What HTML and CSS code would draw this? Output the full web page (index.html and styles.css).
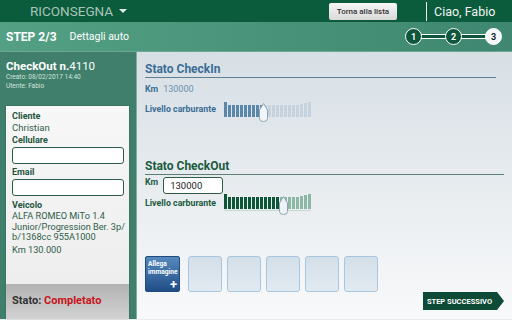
FILE: index.html
```html
<!DOCTYPE html>
<html lang="it">
<head>
    <meta charset="UTF-8">
    <meta name="viewport" content="width=device-width, initial-scale=1.0">
    <title>Riconsegna - Dettagli auto</title>
    <link rel="stylesheet" href="styles.css">
</head>
<body>
    <div class="topbar">
        <div class="app-title">RICONSEGNA <span class="caret"></span></div>
        <button class="back-button">Torna alla lista</button>
        <div class="divider"></div>
        <div class="greeting">Ciao, Fabio</div>
    </div>

    <div class="stepbar">
        <span class="step-label">STEP 2/3</span>
        <span class="step-title">Dettagli auto</span>
        <div class="steps">
            <span class="step-dot">1</span>
            <span class="step-line"></span>
            <span class="step-dot">2</span>
            <span class="step-line"></span>
            <span class="step-dot current">3</span>
        </div>
    </div>

    <div class="main">
        <div class="sidebar">
            <div class="order-title"><b>CheckOut n.</b>4110</div>
            <div class="order-meta">Creato: 08/02/2017 14:40</div>
            <div class="order-meta">Utente: Fabio</div>

            <div class="card">
                <div class="card-body">
                    <div class="field-label">Cliente</div>
                    <div class="field-value">Christian</div>
                    <div class="field-label">Cellulare</div>
                    <input class="field-input" type="text">
                    <div class="field-label email">Email</div>
                    <input class="field-input" type="text">
                    <div class="field-label vehicle">Veicolo</div>
                    <div class="vehicle-text">ALFA ROMEO MiTo 1.4<br>Junior/Progression Ber. 3p/<br>b/1368cc 955A1000</div>
                    <div class="vehicle-km">Km 130.000</div>
                </div>
                <div class="card-footer">Stato: <span class="status-done">Completato</span></div>
            </div>
        </div>

        <div class="content">
            <h2 class="section-title checkin">Stato CheckIn</h2>
            <div class="km-row checkin">
                <span class="small-label">Km</span>
                <span class="km-value">130000</span>
            </div>
            <div class="fuel-row checkin">
                <span class="small-label fuel-label">Livello carburante</span>
                <div class="gauge">
                    <span class="bar on"></span><span class="bar on"></span><span class="bar on"></span><span class="bar on"></span><span class="bar on"></span><span class="bar on"></span><span class="bar on"></span><span class="bar on"></span><span class="bar on"></span><span class="bar on"></span><span class="bar"></span><span class="bar"></span><span class="bar"></span><span class="bar"></span><span class="bar"></span><span class="bar"></span><span class="bar"></span><span class="bar"></span><span class="bar"></span><span class="bar"></span><span class="bar"></span><span class="bar"></span>
                    <svg class="thumb" style="left: 35px" width="9" height="19" viewBox="0 0 9 19"><path d="M4.5 0.5 L8.5 7 V15.5 Q8.5 18.5 4.5 18.5 Q0.5 18.5 0.5 15.5 V7 Z" fill="#f3f6f8" stroke="#8ca3b5"/></svg>
                </div>
            </div>

            <h2 class="section-title checkout">Stato CheckOut</h2>
            <div class="km-row checkout">
                <span class="small-label">Km</span>
                <input class="km-input" type="text" value="130000">
            </div>
            <div class="fuel-row checkout">
                <span class="small-label fuel-label">Livello carburante</span>
                <div class="gauge">
                    <span class="bar on"></span><span class="bar on"></span><span class="bar on"></span><span class="bar on"></span><span class="bar on"></span><span class="bar on"></span><span class="bar on"></span><span class="bar on"></span><span class="bar on"></span><span class="bar on"></span><span class="bar on"></span><span class="bar on"></span><span class="bar on"></span><span class="bar on"></span><span class="bar"></span><span class="bar"></span><span class="bar"></span><span class="bar"></span><span class="bar"></span><span class="bar"></span><span class="bar"></span><span class="bar"></span>
                    <svg class="thumb" style="left: 55px" width="9" height="19" viewBox="0 0 9 19"><path d="M4.5 0.5 L8.5 7 V15.5 Q8.5 18.5 4.5 18.5 Q0.5 18.5 0.5 15.5 V7 Z" fill="#eef2f5" stroke="#8ca3b5"/></svg>
                </div>
            </div>

            <div class="photos">
                <div class="attach">Allega<br>immagine<span class="plus">+</span></div>
                <span class="photo-slot"></span>
                <span class="photo-slot"></span>
                <span class="photo-slot"></span>
                <span class="photo-slot"></span>
                <span class="photo-slot"></span>
            </div>

            <div class="actions">
                <button class="next-step">STEP SUCCESSIVO</button>
            </div>
        </div>
    </div>
</body>
</html>
```

FILE: styles.css
```css
* {
    box-sizing: border-box;
}
body {
    margin: 0;
    width: 512px;
    height: 320px;
    overflow: hidden;
    font-family: Roboto, "Liberation Sans", sans-serif;
    background-color: #e8ecf0;
}
button {
    font-family: inherit;
    cursor: pointer;
}

/* top bar */
.topbar {
    height: 22px;
    background-color: #0b5c3d;
    display: flex;
    align-items: center;
}
.app-title {
    padding-left: 30px;
    font-size: 13.5px;
    color: #a8c5b7;
    display: flex;
    align-items: center;
    gap: 6px;
    flex: 1;
}
.caret {
    width: 0;
    height: 0;
    border-left: 4.5px solid transparent;
    border-right: 4.5px solid transparent;
    border-top: 4.5px solid #e2ebe6;
}
.back-button {
    width: 68px;
    height: 17px;
    padding: 0;
    border: none;
    border-radius: 2px;
    background: linear-gradient(#f7f7f7, #d9d9d9);
    color: #333;
    font-size: 8px;
    font-weight: 500;
}
.divider {
    width: 1px;
    height: 19px;
    background-color: #eef3f0;
    margin: 0 7px 0 29px;
}
.greeting {
    color: #f2f5f3;
    font-size: 12.5px;
    width: 78px;
}

/* step bar */
.stepbar {
    height: 30px;
    background: linear-gradient(to right, #53a084, #3f8770);
    display: flex;
    align-items: center;
    padding-left: 6px;
    border-bottom: 1px solid #6aa892;
}
.step-label {
    color: #fff;
    font-weight: bold;
    font-size: 12px;
    margin-right: 13px;
}
.step-title {
    color: #fff;
    font-size: 10.5px;
    flex: 1;
}
.steps {
    display: flex;
    align-items: center;
    margin-right: 10px;
}
.step-dot {
    width: 17px;
    height: 17px;
    border-radius: 50%;
    border: 1.5px solid #fff;
    background-color: #0e573c;
    color: #fff;
    font-size: 9px;
    font-weight: bold;
    display: flex;
    align-items: center;
    justify-content: center;
    position: relative;
    z-index: 1;
}
.step-dot.current {
    background-color: #f6f7f7;
    color: #123;
}
.step-line {
    width: 25px;
    height: 5px;
    margin: 0 -1px;
    background-color: #0e573c;
    border-top: 1px solid #fff;
    border-bottom: 1px solid #fff;
}

/* main */
.main {
    display: flex;
    height: 267px;
}
.sidebar {
    width: 137px;
    background-color: #3f7f6b;
    border-right: 1px solid #7fae9c;
    padding: 7px 7px 0 6px;
    display: flex;
    flex-direction: column;
}
.order-title {
    color: #fff;
    font-size: 11.5px;
    line-height: 14px;
}
.order-meta {
    color: #d5e4de;
    font-size: 6.5px;
    line-height: 9px;
}
.card {
    margin-top: 15px;
    flex: 1;
    background: linear-gradient(#f7f7f7, #ececec);
    display: flex;
    flex-direction: column;
    box-shadow: 0 0 2px rgba(0,0,0,0.2);
}
.card-body {
    padding: 5px 0 0 6px;
    flex: 1;
}
.field-label {
    color: #1e553e;
    font-weight: bold;
    font-size: 9px;
    line-height: 11px;
}
.field-value {
    color: #2f5e49;
    font-size: 9.5px;
    line-height: 12px;
    margin-bottom: 1px;
}
.field-input {
    display: block;
    width: 112px;
    height: 17px;
    margin-top: 1px;
    border: 1px solid #2e5c47;
    border-radius: 3px;
    background-color: #fff;
}
.field-label.email {
    margin-top: 3px;
}
.field-label.vehicle {
    margin-top: 4px;
}
.vehicle-text, .vehicle-km {
    color: #2f5e49;
    font-size: 9.2px;
    line-height: 10.5px;
    white-space: nowrap;
}
.vehicle-km {
    margin-top: 2px;
}
.card-footer {
    height: 35px;
    background: linear-gradient(#b3b3b3, #d2d2d2);
    padding: 10px 0 0 6px;
    font-size: 11px;
    font-weight: bold;
    color: #333;
}
.status-done {
    color: #c8141b;
}

/* content */
.content {
    flex: 1;
    background: linear-gradient(#d7dfe5, #f8f9fa);
    padding: 10px 8px 0 8px;
    display: flex;
    flex-direction: column;
}
.section-title {
    margin: 0;
    font-size: 12px;
    line-height: 14px;
    padding-bottom: 1px;
    border-bottom: 1px solid #5e7f98;
}
.section-title.checkin {
    color: #3a6d96;
    margin-right: 8px;
}
.section-title.checkout {
    color: #1b5a3e;
    margin-top: 42px;
    border-bottom-color: #5f7f74;
}
.small-label {
    font-size: 8.8px;
    font-weight: bold;
}
.km-row {
    display: flex;
    align-items: center;
    gap: 5px;
}
.km-row.checkin {
    margin-top: 6px;
    color: #3a6d96;
}
.km-value {
    font-size: 9px;
    color: #6a90ad;
}
.km-row.checkout {
    margin-top: 2px;
    color: #1b5a3e;
    align-items: flex-start;
    gap: 5px;
}
.km-input {
    width: 60px;
    height: 17px;
    border: 1px solid #2e5c47;
    border-radius: 3px;
    background-color: #fff;
    font-family: inherit;
    font-size: 9.5px;
    padding: 0 6px;
    color: #222;
}
.fuel-row {
    display: flex;
    align-items: center;
}
.fuel-row.checkin {
    margin-top: 7px;
    color: #3a6d96;
}
.fuel-row.checkout {
    margin-top: 0;
    color: #1b5a3e;
}
.fuel-label {
    width: 79px;
}
.gauge {
    position: relative;
    height: 16px;
    display: flex;
    align-items: flex-end;
    gap: 1px;
}
.checkout .gauge {
    border-bottom: 1px solid #c9d6cf;
    height: 17px;
    padding-bottom: 1px;
}
.bar {
    width: 3px;
    height: 12px;
    background-color: #c4d3de;
}
.bar:first-child {
    height: 15px;
}
.bar:nth-last-child(2) {
    height: 15px;
}
.bar:nth-last-child(3) {
    height: 14px;
}
.bar:nth-last-child(4) {
    height: 13px;
}
.bar.on {
    background-color: #5b88aa;
}
.checkout .bar {
    background-color: #8cb9a5;
}
.checkout .bar.on {
    background-color: #0d5637;
}
.thumb {
    position: absolute;
    top: 2px;
}

/* photos */
.photos {
    display: flex;
    gap: 5px;
    margin-top: 45px;
}
.attach {
    width: 35px;
    height: 36px;
    border: 1px solid #1e4c80;
    border-radius: 2px;
    background: linear-gradient(#5689bd, #1f4e86);
    color: #fff;
    font-size: 6.6px;
    font-weight: bold;
    line-height: 8px;
    padding: 3px 0 0 2px;
    position: relative;
    margin-right: 3px;
}
.plus {
    position: absolute;
    right: 2px;
    bottom: 0;
    font-size: 13px;
    line-height: 13px;
}
.photo-slot {
    width: 34px;
    height: 36px;
    border: 1px solid #a9c6e0;
    border-radius: 3px;
    background: linear-gradient(#d3dfe9, #e2eaf1);
}

/* next */
.actions {
    display: flex;
    justify-content: flex-end;
}
.next-step {
    height: 18px;
    width: 81px;
    border: none;
    padding: 0 8px 0 0;
    background-color: #0e4b36;
    color: #fff;
    font-size: 7.5px;
    font-weight: bold;
    clip-path: polygon(0 0, 74px 0, 81px 50%, 74px 100%, 0 100%);
}
```
